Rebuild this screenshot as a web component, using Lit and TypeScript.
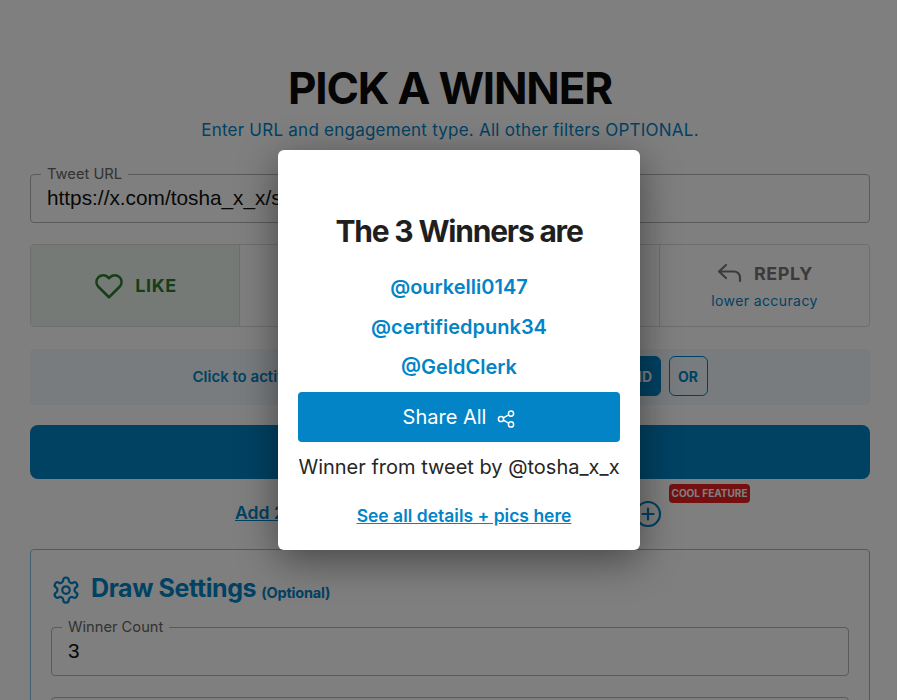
import { html, LitElement, css } from 'lit';
import { customElement } from 'lit/decorators.js';

const WINNERS = ['@ourkelli0147', '@certifiedpunk34', '@GeldClerk'];

@customElement('app-root')
export class AppRoot extends LitElement {
  static styles = css`
    :host {
      display: block;
      position: relative;
      width: 897px;
      height: 700px;
      overflow: hidden;
      background: #fff;
      font-family: Inter, 'Liberation Sans', sans-serif;
      color: #0a0a0a;
    }
    .page {
      padding: 0 27px 0 30px;
    }
    h1 {
      margin: 0;
      padding-top: 63px;
      height: 50px;
      line-height: 50px;
      font-size: 44px;
      font-weight: 700;
      letter-spacing: -1.2px;
      text-align: center;
    }
    .sub {
      margin: 4px 0 0;
      line-height: 26px;
      font-size: 17px;
      letter-spacing: 0.24px;
      color: #0284c7;
      text-align: center;
    }
    .field {
      margin: 0;
      padding: 0 16px;
      height: 56px;
      box-sizing: border-box;
      border: 1px solid #b5b5b5;
      border-radius: 4px;
      min-width: 0;
    }
    .field legend {
      margin-left: -6px;
      padding: 0 6px;
      font-size: 14.7px;
      line-height: 14px;
      color: #666;
    }
    .field input {
      display: block;
      width: 100%;
      border: none;
      outline: none;
      padding: 0;
      margin-top: 3px;
      height: 28px;
      background: transparent;
      font-family: 'Liberation Sans', sans-serif;
      font-size: 20.8px;
      color: #111;
    }
    .url {
      margin-top: 24px;
    }
    .tiles {
      display: grid;
      grid-template-columns: 208px 210px 210px 1fr;
      margin-top: 21px;
      height: 83px;
      box-sizing: border-box;
      border: 1px solid #dcdcdc;
      border-radius: 4px;
    }
    .tile {
      display: flex;
      flex-direction: column;
      align-items: center;
      justify-content: center;
      border-left: 1px solid #dcdcdc;
    }
    .tile:first-child {
      border-left: none;
    }
    .tile.on {
      background: #edf5ed;
    }
    .tile-top {
      display: flex;
      align-items: center;
      gap: 10px;
      font-size: 18px;
      font-weight: 700;
      letter-spacing: 0.6px;
      color: #777;
    }
    .tile.on .tile-top {
      color: #2e7d32;
    }
    .tile-top .reply-icon {
      margin-right: 2px;
    }
    .tile-note {
      margin-top: 8px;
      font-size: 14px;
      letter-spacing: 0.4px;
      color: #0284c7;
    }
    .filter {
      display: flex;
      align-items: center;
      justify-content: center;
      gap: 8px;
      margin-top: 22px;
      height: 56px;
      padding-bottom: 2px;
      box-sizing: border-box;
      border-radius: 4px;
      background: #f0f8fe;
      font-size: 15px;
      font-weight: 600;
      color: #0284c7;
    }
    .filter-label {
      width: 412px;
      white-space: nowrap;
    }
    .mode {
      display: flex;
      align-items: center;
      justify-content: center;
      width: 39px;
      height: 40px;
      box-sizing: border-box;
      border: 1px solid #0284c7;
      border-radius: 6px;
      font-size: 14px;
      font-weight: 700;
    }
    .mode.on {
      width: 48px;
      background: #0284c7;
      color: #fff;
    }
    .pick {
      display: flex;
      align-items: center;
      justify-content: center;
      margin-top: 20px;
      height: 54px;
      border-radius: 8px;
      background: #0284c7;
      font-size: 20px;
      font-weight: 700;
      color: #fff;
    }
    .extra {
      display: flex;
      align-items: center;
      position: relative;
      height: 70px;
      padding-left: 205px;
      box-sizing: border-box;
      font-size: 17.6px;
      font-weight: 600;
      color: #0284c7;
    }
    .extra a {
      width: 399px;
      margin-bottom: 3px;
      white-space: nowrap;
      text-decoration: underline;
    }
    .badge {
      position: absolute;
      left: 639px;
      top: 5px;
      width: 81px;
      height: 19px;
      border-radius: 4px;
      background: #e82020;
      font-size: 10px;
      font-weight: 700;
      line-height: 19px;
      text-align: center;
      color: #fff;
    }
    .settings {
      box-sizing: border-box;
      height: 300px;
      padding: 20px;
      border: 1px solid #7fc1e3;
      border-radius: 4px;
    }
    .settings-head {
      display: flex;
      align-items: center;
      gap: 10px;
      height: 40px;
      color: #0284c7;
    }
    .settings-head h2 {
      margin: 0 0 4px;
      font-size: 25px;
      font-weight: 700;
      letter-spacing: -0.4px;
    }
    .settings-head small {
      margin: 4px 0 0 -5px;
      font-size: 14.5px;
      font-weight: 700;
      letter-spacing: -0.2px;
    }
    .count {
      margin-top: 10px;
    }
    .next {
      margin-top: 21px;
      height: 50px;
      border: 1px solid #b5b5b5;
      border-radius: 4px;
    }
    .overlay {
      position: absolute;
      inset: 0;
      display: flex;
      align-items: center;
      justify-content: center;
      padding-left: 21px;
      background: rgba(0, 0, 0, 0.5);
    }
    .modal {
      display: flex;
      flex-direction: column;
      align-items: center;
      box-sizing: border-box;
      width: 362px;
      height: 400px;
      padding: 58px 20px 0;
      border-radius: 6px;
      background: #fff;
      box-shadow: 0 10px 40px rgba(0, 0, 0, 0.45);
    }
    .modal h3 {
      margin: 0 0 13px;
      line-height: 46px;
      font-size: 30px;
      font-weight: 700;
      letter-spacing: -1.2px;
      color: #1f1f1f;
    }
    .winner {
      height: 40px;
      line-height: 40px;
      font-size: 20px;
      font-weight: 600;
      color: #0284c7;
    }
    .share {
      display: flex;
      align-items: center;
      justify-content: center;
      gap: 11px;
      flex: none;
      width: 100%;
      height: 50px;
      margin-top: 5px;
      border-radius: 4px;
      background: #0284c7;
      font-size: 20px;
      color: #fff;
    }
    .share svg {
      margin-top: 3px;
    }
    .by {
      margin-top: 12px;
      line-height: 26px;
      font-size: 20px;
      white-space: nowrap;
      color: #262626;
    }
    .details {
      margin-top: 23px;
      margin-left: 10px;
      line-height: 26px;
      font-size: 17.5px;
      font-weight: 600;
      color: #0284c7;
      text-decoration: underline;
    }
    svg {
      display: block;
      flex: none;
    }
  `;

  render() {
    return html`
      <div class="page">
        <h1>PICK A WINNER</h1>
        <p class="sub">Enter URL and engagement type. All other filters OPTIONAL.</p>
        <fieldset class="field url">
          <legend>Tweet URL</legend>
          <input value="https://x.com/tosha_x_x/status/1893021847561" />
        </fieldset>
        <div class="tiles">
          <div class="tile on">
            <div class="tile-top">
              <svg width="32" height="30" viewBox="0 0 24 24" fill="none" stroke="currentColor" stroke-width="2" stroke-linejoin="round">
                <path d="M12 21 3.5 12.6A5.4 5.4 0 0 1 11.2 5l.8.8.8-.8a5.4 5.4 0 0 1 7.7 7.6z" />
              </svg>
              LIKE
            </div>
          </div>
          <div class="tile"><div class="tile-top">RETWEET</div></div>
          <div class="tile"><div class="tile-top">QUOTE</div></div>
          <div class="tile">
            <div class="tile-top">
              <svg class="reply-icon" width="26" height="20" viewBox="-1 0 26 20" fill="none" stroke="currentColor" stroke-width="2.2" stroke-linecap="round" stroke-linejoin="round">
                <path d="M9 2 2 8.5 9 15M2 8.5h15a6 6 0 0 1 6 6V18" />
              </svg>
              REPLY
            </div>
            <div class="tile-note">lower accuracy</div>
          </div>
        </div>
        <div class="filter">
          <span class="filter-label">Click to activate, then choose how to combine</span>
          <span class="mode on">AND</span>
          <span class="mode">OR</span>
        </div>
        <div class="pick">PICK WINNER</div>
        <div class="extra">
          <a>Add 2nd tweet to pick winners from both</a>
          <svg width="28" height="28" viewBox="0 0 28 28" fill="none" stroke="currentColor" stroke-width="2.2" stroke-linecap="round">
            <circle cx="14" cy="14" r="12" />
            <path d="M14 8.5v11M8.5 14h11" />
          </svg>
          <span class="badge">COOL FEATURE</span>
        </div>
        <div class="settings">
          <div class="settings-head">
            <svg width="30" height="30" viewBox="0 0 24 24" fill="none" stroke="currentColor" stroke-width="1.8" stroke-linecap="round" stroke-linejoin="round">
              <path d="M12.22 2h-.44a2 2 0 0 0-2 2v.18a2 2 0 0 1-1 1.73l-.43.25a2 2 0 0 1-2 0l-.15-.08a2 2 0 0 0-2.73.73l-.22.38a2 2 0 0 0 .73 2.73l.15.1a2 2 0 0 1 1 1.72v.51a2 2 0 0 1-1 1.74l-.15.09a2 2 0 0 0-.73 2.73l.22.38a2 2 0 0 0 2.73.73l.15-.08a2 2 0 0 1 2 0l.43.25a2 2 0 0 1 1 1.73V20a2 2 0 0 0 2 2h.44a2 2 0 0 0 2-2v-.18a2 2 0 0 1 1-1.73l.43-.25a2 2 0 0 1 2 0l.15.08a2 2 0 0 0 2.73-.73l.22-.39a2 2 0 0 0-.73-2.73l-.15-.08a2 2 0 0 1-1-1.74v-.5a2 2 0 0 1 1-1.74l.15-.09a2 2 0 0 0 .73-2.73l-.22-.38a2 2 0 0 0-2.73-.73l-.15.08a2 2 0 0 1-2 0l-.43-.25a2 2 0 0 1-1-1.73V4a2 2 0 0 0-2-2z" />
              <circle cx="12" cy="12" r="3" />
            </svg>
            <h2>Draw Settings</h2>
            <small>(Optional)</small>
          </div>
          <fieldset class="field count">
            <legend>Winner Count</legend>
            <input value="3" />
          </fieldset>
          <div class="next"></div>
        </div>
      </div>
      <div class="overlay">
        <div class="modal">
          <h3>The 3 Winners are</h3>
          ${WINNERS.map((w) => html`<div class="winner">${w}</div>`)}
          <div class="share">
            Share All
            <svg width="18" height="18" viewBox="0 0 18 18" fill="none" stroke="currentColor" stroke-width="1.5">
              <circle cx="4" cy="9" r="2.6" />
              <circle cx="14" cy="3.6" r="2.6" />
              <circle cx="14" cy="14.4" r="2.6" />
              <path d="M6.3 7.8l5.4-3M6.3 10.2l5.4 3" />
            </svg>
          </div>
          <div class="by">Winner from tweet by @tosha_x_x</div>
          <a class="details">See all details + pics here</a>
        </div>
      </div>
    `;
  }
}
